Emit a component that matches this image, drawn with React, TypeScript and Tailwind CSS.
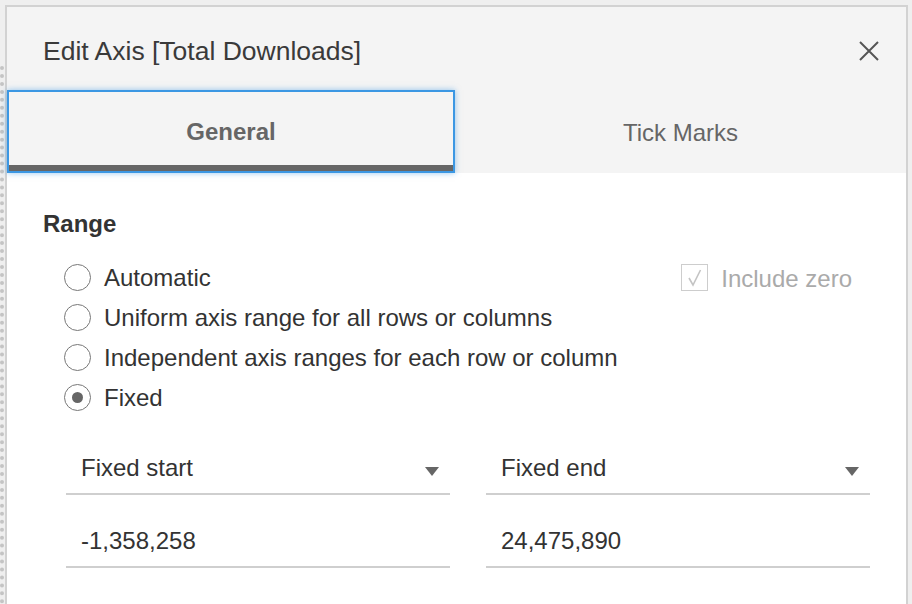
import React from "react";

const FONT = { fontFamily: '"Liberation Sans", Arial, sans-serif' };

const OPTIONS = [
  "Automatic",
  "Uniform axis range for all rows or columns",
  "Independent axis ranges for each row or column",
  "Fixed",
];

function Radio({ checked }: { checked?: boolean }) {
  return (
    <span className="flex h-[27px] w-[27px] shrink-0 items-center justify-center rounded-full border-[1.5px] border-[#777] bg-white">
      {checked && <span className="h-[11px] w-[11px] rounded-full bg-[#666]" />}
    </span>
  );
}

function Field({ label, dropdown }: { label: string; dropdown?: boolean }) {
  return (
    <div className="flex items-center border-b-2 border-[#cfcfcf] pb-[11px] pl-[15px] pr-[11px]">
      <span className="flex-1 text-[24px] leading-[28px] text-[#333]">{label}</span>
      {dropdown && (
        <svg width="14" height="9" viewBox="0 0 14 9" className="mt-[6px]">
          <polygon points="0,0 14,0 7,9" fill="#666" />
        </svg>
      )}
    </div>
  );
}

export default function App() {
  return (
    <div className="flex h-[604px] w-[912px] overflow-hidden bg-[#efefef]" style={FONT}>
      <div className="mt-[66px] w-[5px] border-l-[4px] border-dotted border-[#c4c4c4]" />

      <div className="mt-[5px] flex w-[903px] flex-col border-2 border-b-0 border-[#d2d2d2] bg-white">
        {/* header */}
        <div className="bg-[#f4f4f4] pt-[29px]">
          <div className="flex h-[30px] items-center justify-between pl-[36px] pr-[27px]">
            <h1 className="text-[26.5px] leading-[30px] text-[#3a3a3a]">Edit Axis [Total Downloads]</h1>
            <svg width="20" height="20" viewBox="0 0 20 20">
              <path d="M1 1 L19 19 M19 1 L1 19" stroke="#555" strokeWidth="2" fill="none" />
            </svg>
          </div>

          <div className="mt-[24px] flex h-[83px]">
            <div className="relative z-10 flex w-[448px] flex-col border-2 border-[#3b97e3] shadow-[0_0_6px_rgba(59,151,227,0.55)]">
              <div className="flex flex-1 items-center justify-center pt-[6px] text-[24px] font-bold leading-[28px] text-[#666]">
                General
              </div>
              <div className="h-[6px] bg-[#666]" />
            </div>
            <div className="flex flex-1 items-center justify-center pt-[2px] text-[24px] leading-[28px] text-[#666]">
              Tick Marks
            </div>
          </div>
        </div>

        {/* body */}
        <div className="pt-[37px]">
          <h2 className="pl-[36px] text-[24px] font-bold leading-[28px] text-[#333]">Range</h2>

          <div className="mt-[19px] flex flex-col">
            {OPTIONS.map((o, i) => (
              <div key={o} className="flex h-[40px] items-center pl-[57px]">
                <Radio checked={o === "Fixed"} />
                <span className="ml-[13px] pt-[2px] text-[24px] leading-[28px] text-[#333]">{o}</span>
                {i === 0 && (
                  <div className="ml-auto mr-[54px] flex items-center gap-[13px]">
                    <span className="flex h-[27px] w-[27px] items-center justify-center border-[1.5px] border-[#cdcdcd]">
                      <svg width="24" height="24" viewBox="0 0 24 24">
                        <polyline points="6,13 10,20 17.5,5" stroke="#c4c4c4" strokeWidth="1.6" fill="none" />
                      </svg>
                    </span>
                    <span className="pt-[4px] text-[24px] leading-[28px] text-[#aaa]">Include zero</span>
                  </div>
                )}
              </div>
            ))}
          </div>

          <div className="mt-[37px] grid grid-cols-2 gap-x-[36px] gap-y-[32px] pl-[59px] pr-[36px]">
            <Field label="Fixed start" dropdown />
            <Field label="Fixed end" dropdown />
            <Field label="-1,358,258" />
            <Field label="24,475,890" />
          </div>
        </div>
      </div>
    </div>
  );
}
